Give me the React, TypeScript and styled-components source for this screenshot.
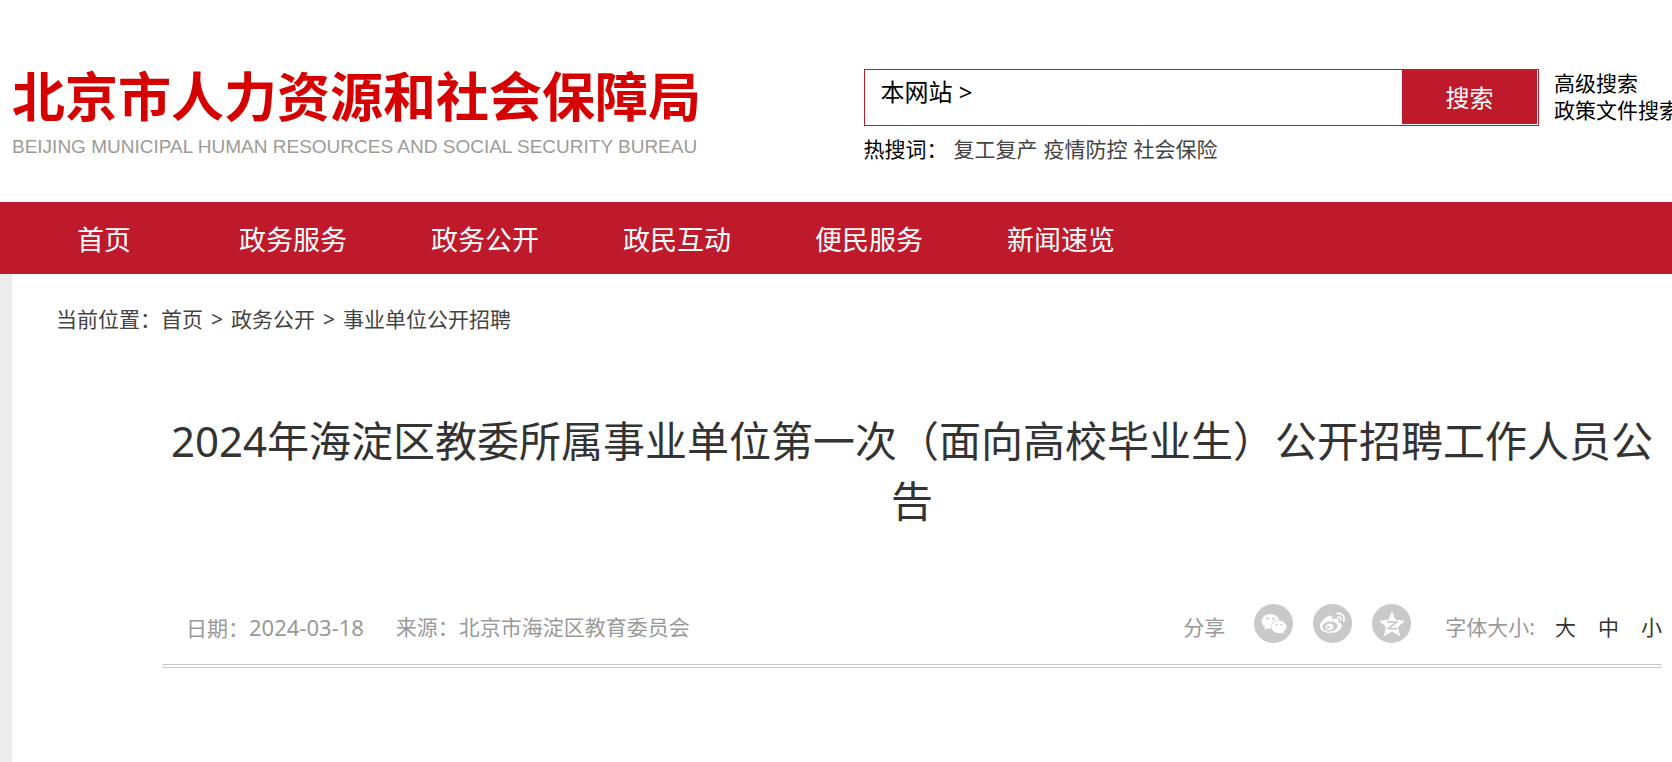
import React from "react";
import styled, { createGlobalStyle } from "styled-components";
import { FaWeixin, FaWeibo } from "react-icons/fa";

const GlobalStyle = createGlobalStyle`
  *, *::before, *::after { box-sizing: border-box; }
  body {
    margin: 0;
    background: #fff;
    color: #000;
    font-family: "Noto Sans", "Noto Sans CJK SC", sans-serif;
    font-size: 21px;
    line-height: 27px;
    overflow-x: hidden;
  }
  a { color: inherit; text-decoration: none; }
  button {
    margin: 0;
    padding: 0;
    border: 0;
    background: none;
    color: inherit;
    font: inherit;
    cursor: pointer;
  }
`;

const Page = styled.div`
  display: flex;
  flex-direction: column;
  min-height: 100vh;
`;

const Header = styled.header`
  display: flex;
  align-items: flex-start;
  gap: 5px;
  height: 202px;
  padding: 62px 0 0 12px;
  white-space: nowrap;
`;

const Brand = styled.a`
  flex: 0 0 auto;
  width: 51%;
`;

const BrandName = styled.span`
  display: block;
  color: #d70000;
  font-family: "Noto Sans CJK SC", sans-serif;
  font-size: 53px;
  font-weight: 700;
  line-height: 64px;
`;

const BrandLatin = styled.span`
  display: block;
  color: #9d9b96;
  font-family: "Liberation Sans", sans-serif;
  font-size: 19px;
  line-height: 42px;
`;

const Search = styled.form`
  flex: 1;
  min-width: 0;
  padding-top: 7px;
`;

const SearchBox = styled.div`
  display: flex;
  align-items: flex-start;
  height: 57px;
  padding: 0 1px 1px 16px;
  border: 1px solid #be1a2b;
`;

const Scope = styled.button`
  padding-top: 6px;
  font-size: 24px;
  line-height: 32px;
`;

const SearchInput = styled.input`
  flex: 1;
  min-width: 0;
  height: 53px;
  border: 0;
  outline: 0;
  background: transparent;
  font: inherit;
  font-size: 24px;
`;

const Submit = styled.button`
  width: 135px;
  height: 54px;
  background: #be1a2b;
  color: #fff;
  font-size: 24px;
`;

const HotWords = styled.div`
  display: flex;
  gap: 6px;
  padding-top: 10px;
  color: #444;
`;

const HotLabel = styled.span`
  color: #000;
`;

const SearchLinks = styled.div`
  display: flex;
  flex: 0 0 auto;
  flex-direction: column;
  width: 128px;
  padding: 8px 0 0 10px;
  overflow: hidden;
`;

const Nav = styled.nav`
  display: flex;
  height: 72px;
  padding-left: 35px;
  background: #be1a2b;
`;

const NavLink = styled.a`
  min-width: 162px;
  padding: 0 42px;
  color: #fff;
  font-size: 27px;
  line-height: 76px;
  white-space: nowrap;
`;

const Main = styled.main`
  flex: 1;
  padding: 32px 10px 0 44px;
  border-left: 12px solid #ececec;
`;

const Breadcrumb = styled.nav`
  display: flex;
  color: #444;
`;

const Divider = styled.span`
  padding: 0 8px;
`;

const Article = styled.article`
  margin-left: 106px;
  padding-top: 78px;
`;

const Title = styled.h1`
  margin: 0;
  color: #333;
  font-size: 42px;
  font-weight: 400;
  line-height: 60px;
  text-align: center;
`;

const Meta = styled.div`
  display: flex;
  align-items: center;
  justify-content: space-between;
  height: 77px;
  margin-top: 60px;
  padding-left: 24px;
  border-bottom: 4px double #c8c8c8;
  color: #999;
  white-space: nowrap;
`;

const MetaGroup = styled.div<{ $gap: number }>`
  display: flex;
  align-items: center;
  gap: ${(p) => p.$gap}px;
`;

const DateText = styled.time`
  font-size: 22px;
`;

const ShareList = styled.div`
  display: flex;
  gap: 20px;
  margin: 0 34px 8px 29px;
`;

const ShareButton = styled.button`
  display: grid;
  place-items: center;
  width: 39px;
  height: 39px;
  border-radius: 50%;
  background: #c9c9c9;
  color: #fff;
`;

const SizeList = styled.div`
  display: flex;
  gap: 22px;
  margin-left: 20px;
  color: #333;
`;

const QzoneIcon = () => (
  <svg width="28" height="28" viewBox="0 0 28 28" aria-hidden="true">
    <path
      d="M14 2.5l3.3 7.8 8.7.8-6.5 5.8 1.9 8.6L14 21l-7.4 4.5 1.9-8.6L2 11.1l8.7-.8z"
      fill="#fff"
      stroke="#fff"
      strokeLinejoin="round"
    />
    <path
      d="M9 12.2c3-.7 6.2-.7 9.6 0l-8 6.1c3 .6 6 .6 8.6.1"
      fill="none"
      stroke="#c9c9c9"
      strokeWidth="1.7"
    />
  </svg>
);

const navItems = ["首页", "政务服务", "政务公开", "政民互动", "便民服务", "新闻速览"];
const hotWords = ["复工复产", "疫情防控", "社会保险"];
const trail = ["首页", "政务公开", "事业单位公开招聘"];

export default function App() {
  return (
    <>
      <GlobalStyle />
      <Page>
        <Header>
          <Brand href="#">
            <BrandName>北京市人力资源和社会保障局</BrandName>
            <BrandLatin>BEIJING MUNICIPAL HUMAN RESOURCES AND SOCIAL SECURITY BUREAU</BrandLatin>
          </Brand>
          <Search role="search" onSubmit={(e) => e.preventDefault()}>
            <SearchBox>
              <Scope type="button">本网站 &gt;</Scope>
              <SearchInput type="text" aria-label="搜索" />
              <Submit type="submit">搜索</Submit>
            </SearchBox>
            <HotWords>
              <HotLabel>热搜词：</HotLabel>
              {hotWords.map((word) => (
                <a href="#" key={word}>{word}</a>
              ))}
            </HotWords>
          </Search>
          <SearchLinks>
            <a href="#">高级搜索</a>
            <a href="#">政策文件搜索</a>
          </SearchLinks>
        </Header>
        <Nav>
          {navItems.map((item) => (
            <NavLink href="#" key={item}>{item}</NavLink>
          ))}
        </Nav>
        <Main>
          <Breadcrumb>
            <span>当前位置：</span>
            {trail.map((item, i) => (
              <React.Fragment key={item}>
                {i > 0 && <Divider>&gt;</Divider>}
                <a href="#">{item}</a>
              </React.Fragment>
            ))}
          </Breadcrumb>
          <Article>
            <Title>2024年海淀区教委所属事业单位第一次（面向高校毕业生）公开招聘工作人员公告</Title>
            <Meta>
              <MetaGroup $gap={32}>
                <span>
                  日期：<DateText dateTime="2024-03-18">2024-03-18</DateText>
                </span>
                <span>来源：北京市海淀区教育委员会</span>
              </MetaGroup>
              <MetaGroup $gap={0}>
                <span>分享</span>
                <ShareList>
                  <ShareButton type="button" aria-label="微信"><FaWeixin size={26} /></ShareButton>
                  <ShareButton type="button" aria-label="微博"><FaWeibo size={25} /></ShareButton>
                  <ShareButton type="button" aria-label="QQ空间"><QzoneIcon /></ShareButton>
                </ShareList>
                <span>字体大小:</span>
                <SizeList>
                  <button type="button">大</button>
                  <button type="button">中</button>
                  <button type="button">小</button>
                </SizeList>
              </MetaGroup>
            </Meta>
          </Article>
        </Main>
      </Page>
    </>
  );
}
